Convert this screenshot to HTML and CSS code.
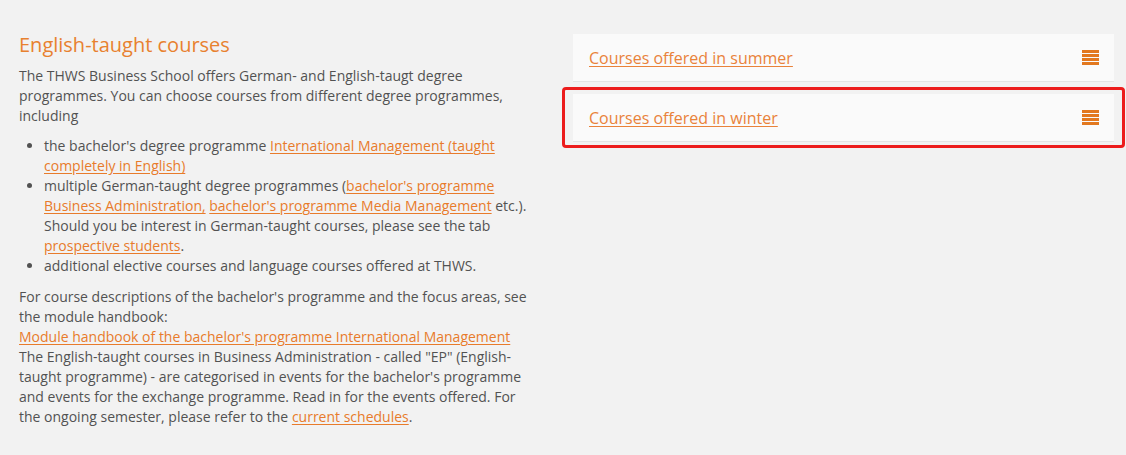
FILE: index.html
```html
<!DOCTYPE html>
<html lang="en">
<head>
<meta charset="utf-8">
<title>English-taught courses</title>
<link rel="stylesheet" href="styles.css">
</head>
<body>
<div class="page">
  <section class="intro">
    <h2 class="title">English-taught courses</h2>
    <p>The THWS Business School offers German- and English-taugt degree programmes. You can choose courses from different degree programmes, including</p>
    <ul class="list">
      <li>the bachelor's degree programme <a href="#">International Management (taught completely in English)</a></li>
      <li>multiple German-taught degree programmes (<a href="#">bachelor's programme Business Administration,</a> <a href="#">bachelor's programme Media Management</a> etc.). Should you be interest in German-taught courses, please see the tab <a href="#">prospective students</a>.</li>
      <li>additional elective courses and language courses offered at THWS.</li>
    </ul>
    <p>For course descriptions of the bachelor's programme and the focus areas, see the module handbook:<br><a href="#">Module handbook of the bachelor's programme International Management</a><br>The English-taught courses in Business Administration - called "EP" (English-taught programme) - are categorised in events for the bachelor's programme and events for the exchange programme. Read in for the events offered. For the ongoing semester, please refer to the <a href="#">current schedules</a>.</p>
  </section>
  <aside class="panels">
    <div class="panel">
      <a href="#" class="panel-link">Courses offered in summer</a>
      <svg class="panel-icon" width="17" height="15" viewBox="0 0 17 15"><rect x="0" y="0" width="17" height="3"/><rect x="0" y="4" width="17" height="3"/><rect x="0" y="8" width="17" height="3"/><rect x="0" y="12" width="17" height="3"/></svg>
    </div>
    <div class="panel panel-marked">
      <a href="#" class="panel-link">Courses offered in winter</a>
      <svg class="panel-icon" width="17" height="15" viewBox="0 0 17 15"><rect x="0" y="0" width="17" height="3"/><rect x="0" y="4" width="17" height="3"/><rect x="0" y="8" width="17" height="3"/><rect x="0" y="12" width="17" height="3"/></svg>
    </div>
  </aside>
</div>
</body>
</html>
```
FILE: styles.css
```css
html, body {
  margin: 0;
  padding: 0;
  background: #f2f2f2;
}
body {
  font-family: "Open Sans", "Liberation Sans", sans-serif;
  font-size: 14px;
  line-height: 20px;
  color: #525252;
}
a {
  color: #e87b2b;
  text-decoration: underline;
  text-underline-offset: 2px;
}
.page {
  display: flex;
  align-items: flex-start;
  gap: 33px;
  padding: 34px 12px 0 19px;
}
.intro {
  width: 521px;
  flex: none;
}
.title {
  margin: -2px 0 8px;
  font-size: 20px;
  line-height: 26px;
  font-weight: 400;
  color: #e8812f;
}
.intro p {
  margin: 0;
}
.list {
  margin: 10px 0 11px;
  padding-left: 25px;
}
.panels {
  width: 541px;
  flex: none;
  display: flex;
  flex-direction: column;
  gap: 12px;
}
.panel {
  position: relative;
  box-sizing: border-box;
  height: 48px;
  background: #fafafa;
  border-bottom: 1px solid #e4e4e4;
  display: flex;
  align-items: center;
  justify-content: space-between;
  padding: 0 15px 0 16px;
}
.panel-link {
  font-size: 16px;
  line-height: 22px;
  color: #e9823a;
}
.panel-icon {
  fill: #e2781f;
  display: block;
}
.panel-marked::after {
  content: "";
  position: absolute;
  left: -11px;
  top: -7px;
  right: -11px;
  bottom: -7px;
  border: 3px solid #ec1c1c;
  border-radius: 4px;
  pointer-events: none;
}
```
